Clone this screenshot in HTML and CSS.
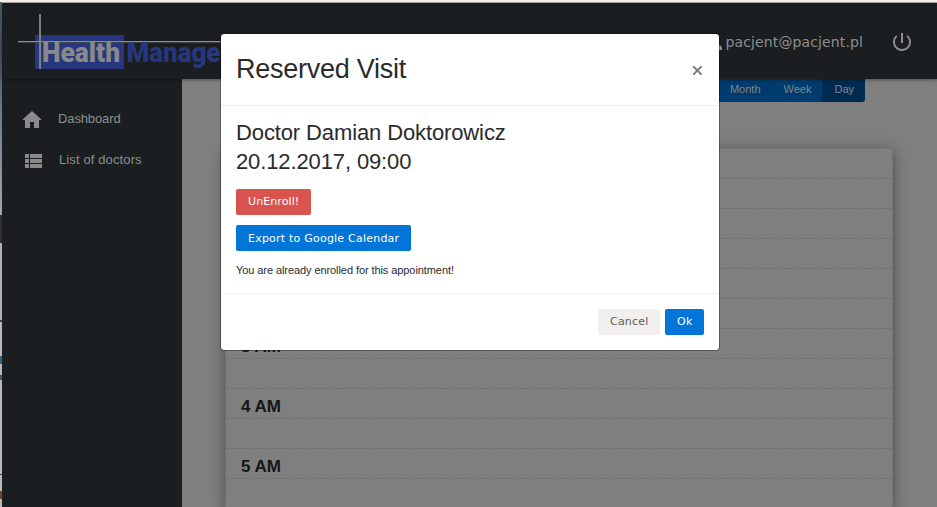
FILE: index.html
```html
<!DOCTYPE html>
<html lang="en">
<head>
<meta charset="utf-8">
<title>Reserved Visit</title>
<link rel="stylesheet" href="styles.css">
</head>
<body>
<div class="window">
  <div class="edge"></div>
  <div class="app">
    <header class="topbar">
      <svg class="logo" width="206" height="60" viewBox="0 0 206 60">
        <rect x="19" y="25" width="89" height="34" fill="#27377f"/>
        <path d="M2 32.5H206" stroke="#404445" stroke-width="1"/>
        <path d="M2 31.5H206" stroke="#8b8b8b" stroke-width="1"/>
        <path d="M24 4V59" stroke="#7f8080" stroke-width="2"/>
        <text class="logo-text" x="26" y="52" fill="#898989" textLength="78" lengthAdjust="spacingAndGlyphs">Health</text>
        <text class="logo-text" x="110.500" y="52" fill="#27377f" textLength="94" lengthAdjust="spacingAndGlyphs">Manage</text>
      </svg>
      <div class="user">
        <svg width="24" height="24" viewBox="0 0 24 24" fill="#8c8e8f"><path d="M12 12a4 4 0 1 0 0-8 4 4 0 0 0 0 8zm0 2c-3 0-8 1.400-8 4v2h16v-2c0-2.600-5-4-8-4z"/></svg>
        <span>pacjent@pacjent.pl</span>
      </div>
      <svg class="power" width="24" height="24" viewBox="0 0 24 24" fill="#8c8e8f"><path d="M13 3h-2v10h2V3zm4.830 2.170l-1.420 1.420C17.990 7.860 19 9.810 19 12c0 3.870-3.130 7-7 7s-7-3.130-7-7c0-2.190 1.010-4.140 2.580-5.420L6.170 5.170C4.230 6.820 3 9.260 3 12c0 4.970 4.030 9 9 9s9-4.030 9-9c0-2.740-1.230-5.180-3.170-6.830z"/></svg>
    </header>
    <div class="content">
      <nav class="sidebar">
        <a class="nav-item"><svg width="24" height="24" viewBox="0 0 24 24" fill="#898b8b"><path d="M10 20v-6h4v6h5v-8h3L12 3 2 12h3v8z"/></svg><span>Dashboard</span></a>
        <a class="nav-item list"><svg width="24" height="24" viewBox="0 0 24 24" fill="#898b8b"><path d="M4 14h4v-4H4v4zm0 5h4v-4H4v4zM4 9h4V5H4v4zm5 5h12v-4H9v4zm0 5h12v-4H9v4zM9 5v4h12V5H9z"/></svg><span>List of doctors</span></a>
      </nav>
      <main class="main">
        <div class="views"><span>Month</span><span>Week</span><span class="active">Day</span></div>
        <div class="calendar">
          <div class="slot"></div><div class="slot"></div>
          <div class="slot"></div><div class="slot"></div>
          <div class="slot"></div><div class="slot"></div>
          <div class="slot">3 AM</div><div class="slot"></div>
          <div class="slot">4 AM</div><div class="slot"></div>
          <div class="slot">5 AM</div><div class="slot"></div>
        </div>
      </main>
    </div>
  </div>
</div>
<section class="modal">
  <div class="modal-header">
    <h1>Reserved Visit</h1>
    <svg class="close" width="11" height="11" viewBox="0 0 11 11"><path d="M1.200 1.200l8.400 8.400M9.600 1.200L1.200 9.600" stroke="#7f7f7f" stroke-width="2"/></svg>
  </div>
  <div class="modal-body">
    <h2>Doctor Damian Doktorowicz<br>20.12.2017, 09:00</h2>
    <button class="btn danger">UnEnroll!</button>
    <button class="btn primary export">Export to Google Calendar</button>
    <p>You are already enrolled for this appointment!</p>
  </div>
  <div class="modal-footer">
    <button class="btn cancel">Cancel</button>
    <button class="btn primary ok">Ok</button>
  </div>
</section>
</body>
</html>
```
FILE: styles.css
```css
* { box-sizing: border-box; }
body {
  margin: 0;
  width: 937px;
  height: 507px;
  overflow: hidden;
  font-family: "Liberation Sans", Arial, sans-serif;
  font-size: 11px;
  color: #292b2c;
  background: #7f7f7f;
}
h1, h2, p { margin: 0; font-weight: 400; }
.window {
  display: flex;
  height: 507px;
  border-top: 2px solid #f2f1f0;
}
.edge {
  width: 2px;
  background: linear-gradient(#506273 0, #43515f 50px, #6b7c89 110px, #9ca9b3 213px, #303030 213px, #303030 241px, #b0b0b0 241px, #b0b0b0 318px, #394650 318px, #394650 320px, #b8b8b8 320px, #b8b8b8 354px, #39627f 354px, #39627f 362px, #b8b8b8 362px, #b8b8b8 373px, #665238 373px, #665238 378px, #b8b8b8 378px, #b8b8b8 472px, #444 472px, #444 473px, #b8b8b8 473px, #b8b8b8 489px, #704432 489px, #704432 497px, #b8b8b8 497px);
}
.app {
  flex: 1;
  display: flex;
  flex-direction: column;
  border-top: 1px solid #b4aca6;
}
.topbar {
  position: relative;
  height: 76px;
  flex: none;
  display: flex;
  align-items: center;
  padding: 0 23px 0 14px;
  background: #1a1e20;
  box-shadow: 0 1px 3px rgba(0, 0, 0, .4);
}
.logo { align-self: flex-start; margin-top: 7px; overflow: visible; }
.logo-text { font: 900 27px Roboto, sans-serif; }
.user {
  display: flex;
  align-items: center;
  margin: 2px 0 0 auto;
  font: 14px "DejaVu Sans", sans-serif;
  letter-spacing: .12px;
  color: #8c8e8f;
}
.power { margin: 2px 0 0 27px; }
.content { flex: 1; display: flex; min-height: 0; }
.sidebar {
  width: 180px;
  padding: 29px 0 0 18px;
  background: #1a1e20;
}
.nav-item {
  display: flex;
  align-items: center;
  gap: 14px;
  height: 24px;
  margin-bottom: 17px;
  font-size: 13px;
  letter-spacing: -.12px;
  color: #8c8e8f;
}
.nav-item span { margin-top: -3px; }
.nav-item.list { padding-left: 1px; letter-spacing: .12px; }
.main {
  flex: 1;
  padding: 0 44px 0 43px;
  background: #7f7f7f;
  overflow: hidden;
}
.views {
  display: flex;
  justify-content: flex-end;
  height: 23px;
  margin: 0 28px 46px 0;
  line-height: 21px;
  color: #80858a;
}
.views span { padding: 0 11px 0 12px; background: #003b6d; }
.views .active {
  background: #002b50;
  border-radius: 0 0 3px 0;
}
.calendar {
  border: 1px solid #737373;
  box-shadow: 0 3px 14px rgba(0, 0, 0, .42);
  background: #7f7f7f;
}
.slot {
  height: 30px;
  padding-left: 15px;
  border-bottom: 1px dashed #6f6f6f;
  font-size: 17px;
  font-weight: 700;
  line-height: 35px;
  color: #151617;
}
.modal {
  position: absolute;
  left: 220px;
  top: 33px;
  width: 500px;
  height: 318px;
  border: 1px solid rgba(0, 0, 0, .3);
  border-radius: 4px;
  background: #fff;
  background-clip: padding-box;
}
.modal-header {
  display: flex;
  justify-content: space-between;
  height: 72px;
  padding: 19px 16px 0 15px;
  border-bottom: 1px solid #eceeef;
}
.modal-header h1 { padding-top: 1px; font-size: 27px; line-height: 31px; letter-spacing: -.26px; }
.close { margin-top: 12px; }
.modal-body {
  display: flex;
  flex-direction: column;
  align-items: flex-start;
  height: 188px;
  padding: 12px 15px 0;
  border-bottom: 1px solid #eceeef;
}
.modal-body h2 { margin-bottom: 13px; font-size: 22px; line-height: 29px; letter-spacing: -.12px; }
.modal-body .btn { margin-bottom: 10px; }
.modal-body p { margin-top: 2px; line-height: 14px; letter-spacing: -.08px; color: #292b2c; }
.modal-footer {
  display: flex;
  justify-content: flex-end;
  gap: 5px;
  padding: 15px;
}
.btn {
  height: 26px;
  padding: 0 0 2px 12px;
  border: 0;
  border-radius: 2px;
  font: 11px "DejaVu Sans", sans-serif;
  letter-spacing: .22px;
  text-align: left;
  color: #5c5c5c;
  background: #f2f0ef;
}
.btn.primary { color: #fff; background: #0275d8; }
.btn.danger { width: 75px; letter-spacing: .1px; color: #fff; background: #d9534f; }
.btn.export { width: 175px; padding-bottom: 0; }
.btn.cancel { width: 62px; }
.btn.ok { width: 39px; }
```
